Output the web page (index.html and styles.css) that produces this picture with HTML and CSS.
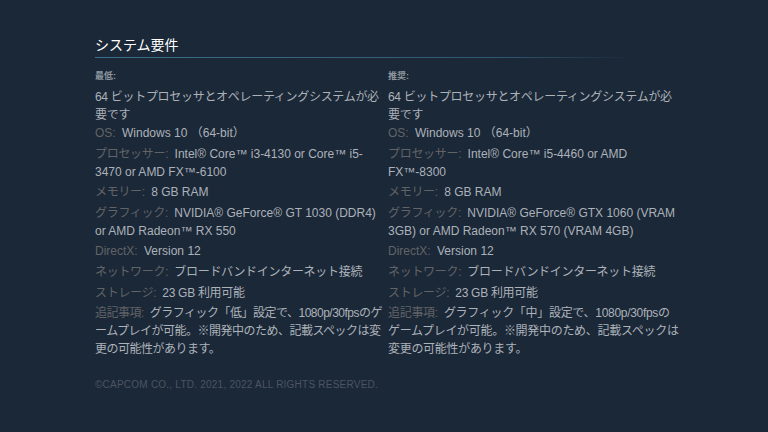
FILE: index.html
```html
<!DOCTYPE html>
<html lang="ja">
<head>
  <meta charset="UTF-8">
  <title>システム要件</title>
  <link rel="stylesheet" href="styles.css">
</head>
<body>
  <div class="sysreq">
    <h2>システム要件</h2>

    <div class="cols">
      <div class="col">
        <ul>
          <li class="head">最低:</li>
          <li class="first jp">64 ビットプロセッサとオペレーティングシステムが必要です</li>
          <li><span class="label">OS:</span> Windows 10 （64-bit）</li>
          <li><span class="label jp">プロセッサー:</span> Intel® Core™ i3-4130 or Core™ i5-3470 or AMD FX™-6100</li>
          <li><span class="label jp">メモリー:</span> 8 GB RAM</li>
          <li><span class="label jp">グラフィック:</span> NVIDIA® GeForce® GT 1030 (DDR4) or AMD Radeon™ RX 550</li>
          <li><span class="label">DirectX:</span> Version 12</li>
          <li class="jp"><span class="label">ネットワーク:</span> ブロードバンドインターネット接続</li>
          <li class="jp"><span class="label">ストレージ:</span> 23 GB 利用可能</li>
          <li class="jp tight"><span class="label">追記事項:</span> グラフィック「低」設定で、1080p/30fpsのゲームプレイが可能。※開発中のため、記載スペックは変更の可能性があります。</li>
        </ul>
      </div>
      <div class="col">
        <ul>
          <li class="head">推奨:</li>
          <li class="first jp">64 ビットプロセッサとオペレーティングシステムが必要です</li>
          <li><span class="label">OS:</span> Windows 10 （64-bit）</li>
          <li><span class="label jp">プロセッサー:</span> Intel® Core™ i5-4460 or AMD FX™-8300</li>
          <li><span class="label jp">メモリー:</span> 8 GB RAM</li>
          <li><span class="label jp">グラフィック:</span> NVIDIA® GeForce® GTX 1060 (VRAM 3GB) or AMD Radeon™ RX 570 (VRAM 4GB)</li>
          <li><span class="label">DirectX:</span> Version 12</li>
          <li class="jp"><span class="label">ネットワーク:</span> ブロードバンドインターネット接続</li>
          <li class="jp"><span class="label">ストレージ:</span> 23 GB 利用可能</li>
          <li class="jp"><span class="label">追記事項:</span> グラフィック「中」設定で、1080p/30fpsのゲームプレイが可能。※開発中のため、記載スペックは変更の可能性があります。</li>
        </ul>
      </div>
    </div>

    <p class="legal">©CAPCOM CO., LTD. 2021, 2022 ALL RIGHTS RESERVED.</p>
  </div>
</body>
</html>
```

FILE: styles.css
```css
body {
  margin: 0;
  background-color: #1b2838;
  font-family: "Liberation Sans", Arial, "Noto Sans CJK JP", sans-serif;
  color: #acb2b8;
}

.sysreq {
  width: 585px;
  margin-left: 95px;
  padding-top: 36px;
}

h2 {
  margin: 0 0 12px 0;
  padding-bottom: 4px;
  font-size: 14px;
  font-weight: normal;
  line-height: 18px;
  color: #ffffff;
  background-image: linear-gradient(to right, #3d6f8c 0%, #2f5670 70%, rgba(47, 86, 112, 0) 92%);
  background-size: 100% 1px;
  background-repeat: no-repeat;
  background-position: left bottom;
}

.cols {
  display: grid;
  grid-template-columns: 288px 1fr;
  column-gap: 5px;
}

ul {
  list-style: none;
  margin: 0;
  padding: 0;
  font-size: 12px;
  line-height: 18px;
}

ul li {
  margin-bottom: 2.6px;
}

ul li.head {
  font-size: 9px;
  font-weight: bold;
  line-height: 12px;
  margin-bottom: 6px;
  color: #8f98a0;
}

ul li.first {
  margin-bottom: 0;
}

/* japanese runs are set a little tighter than the latin text */
.jp {
  letter-spacing: -0.3px;
}

.jp.tight {
  letter-spacing: -0.5px;
}

.label {
  color: #626366;
  margin-right: 3px;
}

.legal {
  margin: 18px 0 0 0;
  font-size: 10px;
  letter-spacing: 0.23px;
  color: #4a5562;
}
```
